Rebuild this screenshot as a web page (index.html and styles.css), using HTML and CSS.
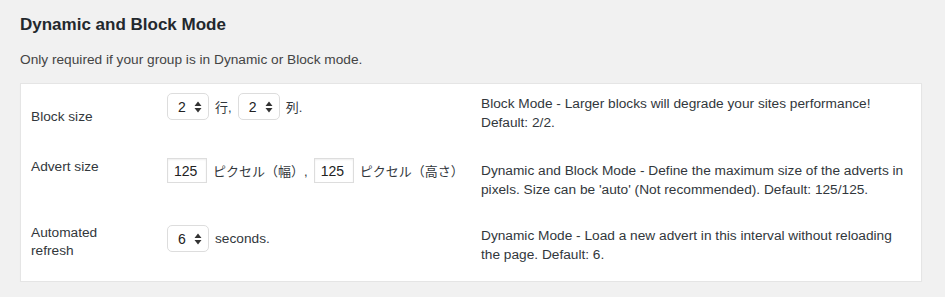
FILE: index.html
```html
<!DOCTYPE html>
<html lang="en">
<head>
<meta charset="utf-8">
<title>Dynamic and Block Mode</title>
<link rel="stylesheet" href="styles.css">
</head>
<body>
<h2 class="title">Dynamic and Block Mode</h2>
<p class="intro">Only required if your group is in Dynamic or Block mode.</p>
<div class="box">
  <div class="row row1">
    <div class="label">Block size</div>
    <div class="field">
      <span class="select"><span class="val">2</span><svg class="arrows" width="8" height="12" viewBox="0 0 8 12"><path d="M4 0.5 L7.5 5 H0.5 Z M4 11.5 L7.5 7 H0.5 Z" fill="#333"/></svg></span>
      <span class="txt jp">行,</span>
      <span class="select"><span class="val">2</span><svg class="arrows" width="8" height="12" viewBox="0 0 8 12"><path d="M4 0.5 L7.5 5 H0.5 Z M4 11.5 L7.5 7 H0.5 Z" fill="#333"/></svg></span>
      <span class="txt jp">列.</span>
    </div>
    <div class="desc">Block Mode - Larger blocks will degrade your sites performance! Default: 2/2.</div>
  </div>
  <div class="row row2">
    <div class="label">Advert size</div>
    <div class="field">
      <span class="input">125</span>
      <span class="txt jp">ピクセル（幅）,</span>
      <span class="input">125</span>
      <span class="txt jp">ピクセル（高さ）</span>
    </div>
    <div class="desc">Dynamic and Block Mode - Define the maximum size of the adverts in pixels. Size can be 'auto' (Not recommended). Default: 125/125.</div>
  </div>
  <div class="row row3">
    <div class="label">Automated<br>refresh</div>
    <div class="field">
      <span class="select"><span class="val">6</span><svg class="arrows" width="8" height="12" viewBox="0 0 8 12"><path d="M4 0.5 L7.5 5 H0.5 Z M4 11.5 L7.5 7 H0.5 Z" fill="#333"/></svg></span>
      <span class="txt">seconds.</span>
    </div>
    <div class="desc">Dynamic Mode - Load a new advert in this interval without reloading the page. Default: 6.</div>
  </div>
</div>
</body>
</html>
```
FILE: styles.css
```css
html, body {
  margin: 0;
  padding: 0;
  background: #f1f1f1;
}
body {
  font-family: "Liberation Sans", Arial, "Noto Sans CJK JP", sans-serif;
  font-size: 13.7px;
  color: #444;
  padding: 0 20px;
  width: 905px;
}
.title {
  margin: 0;
  padding-top: 14px;
  font-size: 17px;
  line-height: 22px;
  font-weight: bold;
  color: #23282d;
}
.intro {
  margin: 14px 0 0 0;
  line-height: 20px;
  color: #444;
}
.box {
  margin-top: 13px;
  width: 900px;
  background: #fff;
  border: 1px solid #e5e5e5;
  box-shadow: 0 1px 1px rgba(0,0,0,0.04);
}
.row {
  display: grid;
  grid-template-columns: 136px 314px 1fr;
  align-items: start;
  padding-left: 10px;
}
.label {
  color: #32373c;
  line-height: 18px;
}
.desc {
  line-height: 19px;
  color: #32373c;
  padding-right: 8px;
}
.field {
  display: flex;
  align-items: center;
  color: #32373c;
}
.txt {
  margin: 0 6px;
  white-space: nowrap;
}
.jp {
  font-size: 13px;
}
.select {
  box-sizing: border-box;
  width: 42px;
  height: 27px;
  border: 1px solid #ddd;
  border-radius: 5px;
  background: #fff;
  display: flex;
  align-items: center;
  justify-content: space-between;
  padding: 0 6px 0 10px;
  font-size: 14px;
  color: #222;
}
.input {
  box-sizing: border-box;
  width: 40px;
  height: 25px;
  border: 1px solid #ddd;
  box-shadow: inset 0 1px 2px rgba(0,0,0,0.07);
  display: flex;
  align-items: center;
  padding-left: 6px;
  font-size: 14px;
  color: #222;
}
.row1 { height: 64px; }
.row1 .label { margin-top: 24px; }
.row1 .field { margin-top: 9px; }
.row1 .desc { margin-top: 10px; }
.row2 { height: 66px; }
.row2 .label { margin-top: 10px; }
.row2 .field { margin-top: 10px; }
.row2 .desc { margin-top: 13px; }
.row3 { height: 67px; }
.row3 .label { margin-top: 10px; }
.row3 .field { margin-top: 11px; }
.row3 .desc { margin-top: 12px; }
```
